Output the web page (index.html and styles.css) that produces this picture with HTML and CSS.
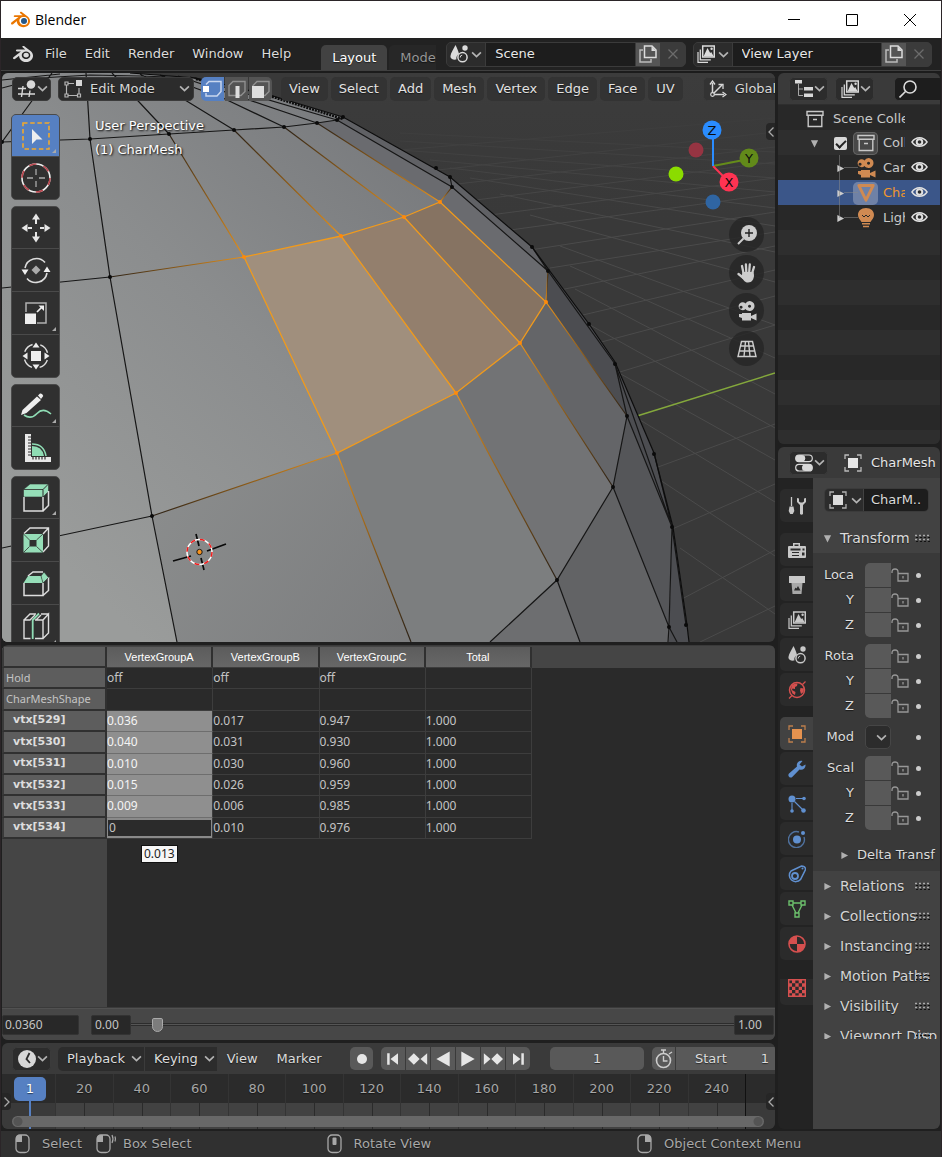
FILE: index.html
```html
<!DOCTYPE html>
<html lang="en">
<head>
<meta charset="utf-8">
<meta name="viewport" content="width=device-width, initial-scale=1">
<title>Blender</title>
<link rel="stylesheet" href="styles.css">
</head>
<body>
<svg class="sprite" aria-hidden="true">
  <symbol id="chevron" viewBox="0 0 10 10"><path d="M1 3l4 4 4-4" fill="none" stroke="#b4b4b4" stroke-width="1.5"/></symbol>
  <symbol id="tri-right" viewBox="0 0 10 10"><path d="M1.500 1l7.500 4-7.500 4z" fill="currentColor"/></symbol>
  <symbol id="tri-down" viewBox="0 0 10 10"><path d="M1 1.500h8l-4 8z" fill="currentColor"/></symbol>
  <symbol id="blender" viewBox="0 0 24 24"><path fill="currentColor" d="M12.51 13.214c.046-.8.438-1.506 1.03-2.006a3.424 3.424 0 0 1 2.212-.79c.85 0 1.631.3 2.211.79.592.5.983 1.206 1.028 2.005.045.823-.285 1.586-.865 2.153a3.389 3.389 0 0 1-2.374.938 3.393 3.393 0 0 1-2.376-.938c-.58-.567-.91-1.33-.865-2.152M7.35 14.831c.006.314.106.922.256 1.398a7.372 7.372 0 0 0 1.593 2.757 8.227 8.227 0 0 0 2.787 2.001 8.947 8.947 0 0 0 3.66.76 8.964 8.964 0 0 0 3.657-.772 8.285 8.285 0 0 0 2.785-2.01 7.428 7.428 0 0 0 1.592-2.762 6.964 6.964 0 0 0 .25-3.074 7.123 7.123 0 0 0-1.016-2.779 7.764 7.764 0 0 0-1.852-2.043h.002L13.566 2.55l-.02-.015c-.492-.378-1.319-.376-1.86.002-.547.382-.609 1.015-.123 1.415l-.001.001 3.126 2.543-9.53.01h-.013c-.788.001-1.545.518-1.695 1.172-.154.665.38 1.217 1.2 1.22V8.9l4.83-.01-8.62 6.617-.034.025c-.813.622-1.075 1.658-.563 2.313.52.667 1.625.668 2.447.004L7.414 14s-.069.52-.063.831zm12.09 1.741c-.97.988-2.326 1.548-3.795 1.55-1.47.004-2.827-.552-3.797-1.538a4.51 4.51 0 0 1-1.036-1.622 4.282 4.282 0 0 1 .282-3.519 4.702 4.702 0 0 1 1.153-1.371c.942-.768 2.141-1.183 3.396-1.185 1.256-.002 2.455.41 3.398 1.175.48.391.87.854 1.152 1.367a4.28 4.28 0 0 1 .522 1.706 4.236 4.236 0 0 1-.239 1.811 4.54 4.54 0 0 1-1.035 1.626"/></symbol>
  <symbol id="scene" viewBox="0 0 18 18"><path d="M5.500 0C7 3 8.600 6.500 9 9c-2 1-3 3-2.600 5.600C3 15.200.4 13.800.4 11.200.8 8 3.800 3.600 5.500 0z" fill="currentColor"/><circle cx="15" cy="3" r="2.700" fill="currentColor"/><circle cx="12.500" cy="12.200" r="4.600" fill="none" stroke="currentColor" stroke-width="1.500"/><path d="M10.200 12.500a2.300 2.300 0 0 1 2-2.400" fill="none" stroke="currentColor"/></symbol>
  <symbol id="layers" viewBox="0 0 18 18"><g fill="none" stroke="currentColor"><path d="M1 7v10.300h10" stroke-width="1.200"/><path d="M3.300 4.500v10.300h10.500" stroke-width="1.300"/><path d="M5.700 1h11.600v11H5.700z" stroke-width="1.500"/></g><path d="M6.500 11.500l4-8.500 2.700 5 1-1 2.600 4.500z" fill="currentColor"/><circle cx="14.600" cy="3.700" r="1.200" fill="currentColor"/></symbol>
  <symbol id="copy" viewBox="0 0 18 18"><path d="M5.500 1H13l4 4v7.500H5.500z" fill="none" stroke="currentColor" stroke-width="1.500"/><path d="M12.500 1v5H17z" fill="currentColor"/><path d="M4 5H1v12h11v-3" fill="none" stroke="currentColor" stroke-width="1.500" opacity=".75"/></symbol>
  <symbol id="cross" viewBox="0 0 12 12"><path d="M1.500 1.500l9 9m0-9l-9 9" fill="none" stroke="currentColor" stroke-width="1.300"/></symbol>
  <symbol id="grid-ball" viewBox="0 0 18 18"><path d="M0 8.500h8M0 14h17M5 6L3.500 17M12 10.500L11 17M9 13" fill="none" stroke="currentColor" stroke-width="1.400"/><circle cx="13" cy="4.500" r="4.300" fill="currentColor"/></symbol>
  <symbol id="edit-mode" viewBox="0 0 18 18"><path d="M1 2h3v3H1zM1 14h3v3H1zM13.500 14h3v3h-3zM2.500 5v9M4 15.500h9.500M15 8v6M4 3.500h6" fill="none" stroke="currentColor" stroke-width="1.200" opacity=".8"/><path d="M12 0h6v6h-6z" fill="currentColor"/></symbol>
  <symbol id="sel-vert" viewBox="0 0 20 20"><path d="M3 5.500l3-3h12v10L14 17H3v-3" fill="none" stroke="#c9d6ee" stroke-width="1.500"/><path d="M0 7h6v6H0z" fill="#fff"/></symbol>
  <symbol id="sel-edge" viewBox="0 0 20 20"><path d="M2 6.500l4-4h12v10l-4 4H2z" fill="none" stroke="#909090" stroke-width="1.400"/><path d="M8.500 7h4v12h-4z" fill="#dedede"/></symbol>
  <symbol id="sel-face" viewBox="0 0 20 20"><path d="M2 6.500l4-4h12v10l-4 4H2z" fill="none" stroke="#909090" stroke-width="1.400"/><path d="M1 7h12v12H1z" fill="#dedede"/></symbol>
  <symbol id="axes" viewBox="0 0 18 18"><path d="M3.500 3v11M4.500 14.500H15M5 13L13 5" fill="none" stroke="currentColor" stroke-width="1.500"/><path d="M1 4.500L3.500 1 6 4.500M13.500 12l3.500 2.500-3.500 2.500M9.500 4.500H14v4.500" fill="none" stroke="currentColor" stroke-width="1.300"/><circle cx="3.500" cy="14.500" r="1.800" fill="#2c2c2c" stroke="currentColor" stroke-width="1.200"/></symbol>
  <symbol id="tree" viewBox="0 0 18 18"><path d="M0 0h7v3.500H0zM9 7h9v3.600H9zM9 13.500h9V17H9z" fill="currentColor"/><path d="M3.500 4v11.500H8M3.500 9H8" fill="none" stroke="currentColor" opacity=".7"/></symbol>
  <symbol id="search" viewBox="0 0 18 18"><circle cx="11" cy="7" r="6" fill="none" stroke="currentColor" stroke-width="1.600"/><path d="M6.500 11.500L.5 17.500" stroke="currentColor" stroke-width="1.600"/></symbol>
  <symbol id="box" viewBox="0 0 18 18"><path d="M1 1.500h16v3.800H1zM2.200 5.500v11h13.600v-11M7 9.500h4" fill="none" stroke="currentColor" stroke-width="1.400"/></symbol>
  <symbol id="eye" viewBox="0 0 18 14"><path d="M1 7c4-6 12-6 16 0-4 6-12 6-16 0z" fill="none" stroke="currentColor" stroke-width="1.500"/><circle cx="9" cy="7" r="4" fill="currentColor"/><circle cx="9" cy="7" r="1.900" fill="#2b2b2b"/></symbol>
  <symbol id="camera" viewBox="0 0 20 20"><path fill="currentColor" fill-rule="evenodd" d="M12.500 0a5 5 0 1 1-4 8 4 4 0 1 1 0-5.500A5 5 0 0 1 12.500 0zM12.500 3.800a1.500 1.500 0 1 0 .1 0zM4 4.800a1.500 1.500 0 1 0 .1 0zM5 12h9v3l5.500-2.500v7L14 17v2.500H5V17L2 16v-3h3z"/></symbol>
  <symbol id="mesh" viewBox="0 0 18 18"><path d="M2.500 2.200h13L9 15.500z" fill="none" stroke="currentColor" stroke-width="2.600" stroke-linejoin="round"/></symbol>
  <symbol id="bulb" viewBox="0 0 18 20"><path d="M9 0c5 0 8 3 8 7 0 3-2 4.500-3.500 7h-9C3 11.500 1 10 1 7c0-4 3-7 8-7z" fill="currentColor"/><path d="M5 7l2 2 2-2 2 2 2-2" fill="none" stroke="#282828"/><path d="M5 15.700h8M6 18.500h6" stroke="currentColor" stroke-width="1.500"/></symbol>
  <symbol id="switches" viewBox="0 0 18 18"><rect x=".7" y="1" width="16.600" height="6.600" rx="3.300" fill="none" stroke="currentColor" stroke-width="1.200"/><rect x=".7" y="1" width="9.500" height="6.600" rx="3.300" fill="currentColor"/><rect x=".7" y="10.400" width="16.600" height="6.600" rx="3.300" fill="none" stroke="currentColor" stroke-width="1.200"/><rect x="7" y="10.400" width="10.300" height="6.600" rx="3.300" fill="currentColor"/></symbol>
  <symbol id="object" viewBox="0 0 18 18"><path d="M4 4h10v10H4z" fill="currentColor"/><path d="M1 5V1h4M13 1h4v4M17 13v4h-4M5 17H1v-4" fill="none" stroke="currentColor" stroke-width="1.300" opacity=".75"/></symbol>
  <symbol id="tools" viewBox="0 0 18 18"><path d="M3.500 0v9" stroke="currentColor" stroke-width="1.300"/><path d="M1.500 9.500h4l.8 4.500-1.500 3H2.200L.7 14z" fill="currentColor"/><path d="M9 1v4l3 3v9q1.500 1.500 3 0V8l3-3V1l-2 .5V4.500l-1.500 1h-2L11 4.500v-3z" fill="currentColor"/></symbol>
  <symbol id="render" viewBox="0 0 18 18"><path fill="currentColor" fill-rule="evenodd" d="M5 2h7v3h5q1 0 1 1v10q0 1-1 1H1q-1 0-1-1V6q0-1 1-1h4zM6.500 3.500V5h4V3.500zM2.500 7.500v2h10v-2zM14.500 7.500v2h2v-2zM4 11v1h7v-1zM4 14v1h7v-1zM14 11.500v3h2.500v-3z"/></symbol>
  <symbol id="output" viewBox="0 0 18 18"><path d="M1 0h16v7H1z" fill="currentColor"/><path fill="currentColor" fill-rule="evenodd" d="M3.500 7h11l-1 11h-9zM6 14.500h6.500L10 10l-1.500 2.500-1-1z" opacity=".8"/></symbol>
  <symbol id="world" viewBox="0 0 18 18"><circle cx="9" cy="9" r="7.500" fill="none" stroke="currentColor" stroke-width="1.500"/><path d="M3.500 4.500q3-2.500 6-2l-.5 2.500-2 1v2l-2.500-.5-.5 1.500 3.500 2-.5 3-2.500-1.500-1.500-4zM12.500 7l3.500.5-.5 3.500-2.500 2-1-3.500z" fill="currentColor"/><path d="M1 17.500l3-3M14.500 3.500l3-3" stroke="currentColor" stroke-width="1.300"/></symbol>
  <symbol id="wrench" viewBox="0 0 18 18"><path d="M17.500 4.500l-3.500 2-2.500-2L14.500 1C11 0 8 3 9 6.500L1 13.500q-1.500 2 .5 3.700 1.600 1 3-.5L11.500 9.500c3.500 1 6.500-1.500 6-5z" fill="currentColor"/></symbol>
  <symbol id="particles" viewBox="0 0 18 18"><circle cx="4" cy="4" r="3.500" fill="currentColor"/><path d="M8 3.500h7M4 8v7M6.500 6.500l8 8" stroke="currentColor" stroke-width="1.100"/><circle cx="16" cy="3.500" r="1.800" fill="currentColor"/><circle cx="4" cy="16" r="1.800" fill="currentColor"/><circle cx="15.500" cy="15.500" r="2.300" fill="currentColor"/></symbol>
  <symbol id="physics" viewBox="0 0 18 18"><circle cx="9" cy="9.500" r="4" fill="currentColor"/><path d="M11 2a8 8 0 1 0 5 5" fill="none" stroke="currentColor" stroke-width="1.400" opacity=".7"/><circle cx="15" cy="3" r="2" fill="currentColor"/></symbol>
  <symbol id="constraint" viewBox="0 0 18 18"><path d="M3 6L13.500 1q4 0 4 3.500L12.500 14.500A6 6 0 1 1 3 6z" fill="none" stroke="currentColor" stroke-width="1.500"/><circle cx="7" cy="11" r="3" fill="none" stroke="currentColor" stroke-width="1.800"/><circle cx="14.500" cy="3.500" r="1" fill="currentColor"/></symbol>
  <symbol id="mesh-data" viewBox="0 0 18 18"><path d="M1 1h4v4H1zM13 1h4v4h-4zM7 13h4v4H7zM5 3h8M4 5l4 8M14 5l-4 8" fill="none" stroke="currentColor" stroke-width="1.400"/></symbol>
  <symbol id="material" viewBox="0 0 18 18"><circle cx="9" cy="9" r="8" fill="none" stroke="currentColor" stroke-width="1.600"/><path d="M9 1a8 8 0 0 0-8 8h8v8a8 8 0 0 0 8-8H9z" fill="currentColor"/></symbol>
  <symbol id="texture" viewBox="0 0 18 18"><path d="M.7.7h16.600v16.600H.7z" fill="none" stroke="currentColor" stroke-width="1.400"/><path d="M4 1h3.300v3.300H4zM10.700 1H14v3.300h-3.300zM1 4.300h3v3.400H1zM7.300 4.300h3.400v3.400H7.300zM14 4.300h3v3.400h-3zM4 7.700h3.300V11H4zM10.700 7.700H14V11h-3.300zM1 11h3v3.300H1zM7.300 11h3.400v3.300H7.300zM14 11h3v3.300h-3zM4 14.300h3.300V17H4zM10.700 14.300H14V17h-3.300z" fill="currentColor"/></symbol>
  <symbol id="lock" viewBox="0 0 18 14"><path d="M1 5V4q0-3 3-3t3 3v1.500M7 5.500h10v7.500H7zM12 8v2.500" fill="none" stroke="currentColor" stroke-width="1.300"/></symbol>
  <symbol id="grip" viewBox="0 0 16 8"><path d="M0 1.500h2m2 0h2m2 0h2m2 0h2M0 5.500h2m2 0h2m2 0h2m2 0h2" stroke="#aaa" stroke-width="1.500"/><path d="M1 3.500h2m2 0h2m2 0h2m2 0h2M1 7.500h2m2 0h2m2 0h2m2 0h2" stroke="#111"/></symbol>
  <symbol id="clock" viewBox="0 0 18 18"><circle cx="9" cy="9" r="9" fill="currentColor"/><path d="M11.500 3L8.500 9l3.500 4" fill="none" stroke="#2b2b2b" stroke-width="1.800"/></symbol>
  <symbol id="mouse-l" viewBox="0 0 24 20"><rect x="1" y="1" width="13" height="17.500" rx="4" fill="none" stroke="currentColor" stroke-width="1.300"/><path d="M1 8V4q0-3 3-3h3v7z" fill="currentColor"/></symbol>
  <symbol id="mouse-drag" viewBox="0 0 24 20"><rect x="1" y="1" width="13" height="17.500" rx="4" fill="none" stroke="currentColor" stroke-width="1.300"/><path d="M1 8V4q0-3 3-3h3v7z" fill="currentColor"/><path d="M16 1q2 4 0 8M19 2.500q1 3 0 5" fill="none" stroke="currentColor" stroke-width="1.200"/></symbol>
  <symbol id="mouse-m" viewBox="0 0 24 20"><rect x="1" y="1" width="13" height="17.500" rx="4" fill="none" stroke="currentColor" stroke-width="1.300"/><rect x="5.500" y="3.500" width="4" height="7.500" rx="1" fill="currentColor"/></symbol>
  <symbol id="mouse-r" viewBox="0 0 24 20"><rect x="1" y="1" width="13" height="17.500" rx="4" fill="none" stroke="currentColor" stroke-width="1.300"/><path d="M14 8V4q0-3-3-3H8v7z" fill="currentColor"/></symbol>
</svg>

<div class="window">
  <header class="titlebar">
    <svg class="title-logo"><use href="#blender"/><circle cx="13" cy="11" r="4" fill="#fff"/><circle cx="13" cy="11" r="3" fill="#265787"/></svg>
    <h1 class="title">Blender</h1>
    <button class="win-btn" aria-label="Minimize"><svg viewBox="0 0 14 14"><path d="M1 6.500h12" stroke="#000"/></svg></button>
    <button class="win-btn" aria-label="Maximize"><svg viewBox="0 0 14 14"><path d="M1.500 1.500h11v11h-11z" fill="none" stroke="#000"/></svg></button>
    <button class="win-btn" aria-label="Close"><svg viewBox="0 0 14 14"><path d="M1 1l12 12M13 1L1 13" stroke="#000"/></svg></button>
  </header>

  <nav class="topbar">
    <button class="logo-btn" aria-label="Blender menu"><svg class="ic20"><use href="#blender"/></svg></button>
    <div class="menus">
      <button class="menu">File</button><button class="menu">Edit</button><button class="menu">Render</button><button class="menu">Window</button><button class="menu">Help</button>
    </div>
    <div class="tabs"><button class="tab active">Layout</button><button class="tab">Mode</button></div>
    <div class="picker">
      <button class="picker-type" aria-label="Browse scene"><svg class="ic18"><use href="#scene"/></svg><svg class="chev"><use href="#chevron"/></svg></button>
      <input class="picker-name" value="Scene" aria-label="Scene">
      <button class="picker-new" aria-label="New scene"><svg class="ic18"><use href="#copy"/></svg></button>
      <button class="picker-del" aria-label="Delete scene"><svg class="ic12"><use href="#cross"/></svg></button>
    </div>
    <div class="picker">
      <button class="picker-type" aria-label="Browse view layer"><svg class="ic18"><use href="#layers"/></svg><svg class="chev"><use href="#chevron"/></svg></button>
      <input class="picker-name" value="View Layer" aria-label="View layer">
      <button class="picker-new" aria-label="New view layer"><svg class="ic18"><use href="#copy"/></svg></button>
      <button class="picker-del" aria-label="Delete view layer"><svg class="ic12"><use href="#cross"/></svg></button>
    </div>
  </nav>

  <main class="workspace">
    <div class="col col-main">
      <section class="viewport">
        <svg class="scene" viewBox="2 73 773 569" preserveAspectRatio="xMinYMin slice" aria-label="3D view">
          <defs>
            <linearGradient id="shade" gradientUnits="userSpaceOnUse" x1="60" y1="560" x2="460" y2="150"><stop offset="0" stop-color="#9a9c9b"/><stop offset=".5" stop-color="#8b8d8e"/><stop offset="1" stop-color="#76787b"/></linearGradient>
            <linearGradient id="shade-low" gradientUnits="userSpaceOnUse" x1="180" y1="400" x2="560" y2="640"><stop offset="0" stop-color="#8c8e8e"/><stop offset="1" stop-color="#757678"/></linearGradient>
            <linearGradient id="to-sel"><stop offset="0" stop-color="#2a2015"/><stop offset="1" stop-color="#e8921a"/></linearGradient>
            <linearGradient id="from-sel"><stop offset="0" stop-color="#e8921a"/><stop offset="1" stop-color="#2a2015"/></linearGradient>
            <linearGradient id="haze" x1="0" y1="0" x2="0" y2="1"><stop offset="0" stop-color="#3c3c3c"/><stop offset=".12" stop-color="#3b3b3b"/><stop offset=".5" stop-color="#3a3a3a" stop-opacity="0"/></linearGradient>
          </defs>
          <rect x="2" y="73" width="773" height="569" fill="#393939"/>
          <g stroke="#4b4b4b" fill="none">
            <path d="M400 133L775 152M400 141L775 164M400 150L775 178M430 160L775 192M450 168L775 208M470 178L775 226M500 194L775 252M530 215L775 282M560 246L775 325M570 266L775 358M575 289L775 394M590 325L775 428M610 368L750 446L775 460M640 420L775 502M660 480L775 556M680 548L775 614"/>
            <path d="M400 150L775 118M420 172L775 132M440 186L775 147M460 202L775 162M490 215L775 178M510 230L775 194M530 250L775 212M550 268L775 232M560 290L775 246M570 318L775 270M590 345L775 296M600 378L775 325M650 470L775 424M670 530L775 484M680 600L775 550M700 642L775 606"/>
          </g>
          <rect x="300" y="73" width="475" height="300" fill="url(#haze)"/>
          <path d="M637 416L775 373" stroke="#84a83c" stroke-width="1.500"/>

          <path d="M2 73H130L196 78 273 96 343 117 450 177 532 247 589 324 615 362 654 453 673 527 687 625 689 642H2z" fill="url(#shade)"/>
          <path d="M2 288L110 277 244 257 337 453 411 642H2z" fill="url(#shade)"/>
          <path d="M152 516L337 453 411 642H177z" fill="url(#shade-low)"/>
          <path d="M337 453L456 393 557 580 490 642H411z" fill="#7c7e7f"/>
          <path d="M456 393L520 343 613 487 557 580z" fill="#727375"/>
          <path d="M520 343L546 302 627 416 613 487z" fill="#646568"/>
          <path d="M557 580L613 487 669 627V642H580z" fill="#626365"/>
          <path d="M490 642L557 580 580 642z" fill="#6d6e70"/>
          <path d="M613 487L627 416 672 527 669 627z" fill="#555659"/>
          <path d="M337 120L452 187 548 271 546 302 440 202 317 123z" fill="#6a6b6f"/>
          <path d="M343 117L450 177 532 247 548 271 452 187 337 120z" fill="#606165"/>
          <path d="M532 247L589 324 615 362 654 453 673 527 687 625 689 642H669L672 527 627 416 546 302 548 271z" fill="#4c4d51"/>
          <path d="M244 257L341 236 456 393 337 453z" fill="#a08f7d"/>
          <path d="M341 236L404 217 520 343 456 393z" fill="#937f6d"/>
          <path d="M404 217L440 202 546 302 520 343z" fill="#867362"/>

          <g fill="none" stroke="#161616" stroke-width="1.200">
            <path d="M2 142L90 139 169 134 234 130 284 127 317 123 337 120 343 117"/>
            <path d="M2 288L110 277M2 548L152 516"/>
            <path d="M86 73L90 139 110 277 152 516 177 642"/>
            <path d="M2 142L34 98 52 73M2 88L40 78 90 75 140 76 196 78M2 80L60 74M112 73L169 134M140 74L185 100 234 130M160 75L225 99 284 127M178 76L317 123M190 77L337 120"/>
            <path d="M337 120L452 187 548 271 615 364 672 527 669 627 668 642M615 364L627 416 613 487 557 580 490 642M627 416L672 527M557 580L580 642M613 487L669 627 677 642M450 177L452 187M532 247L548 271M654 453L672 527M672 527L686 625"/>
          </g>
          <path d="M130 73L196 78 273 96 343 117 450 177 532 247 589 324 615 362 654 453 673 527 687 625 689 642" fill="none" stroke="#0c0c0c" stroke-width="1.200"/>
          <path d="M196 79L273 97 343 119" fill="none" stroke="#0c0c0c" stroke-width="2.500" stroke-dasharray="2 1"/>
          <g fill="none" stroke-width="1.200" stroke="url(#to-sel)"><path d="M110 277L244 257"/><path d="M152 516L337 453"/><path d="M169 134L244 257"/><path d="M234 130L341 236"/><path d="M284 127L404 217"/><path d="M317 123L440 202"/></g>
          <g fill="none" stroke-width="1.200" stroke="url(#from-sel)"><path d="M337 453L411 642"/><path d="M456 393L557 580"/><path d="M520 343L613 487"/><path d="M546 302L627 416"/><path d="M440 202L452 187"/><path d="M546 302L548 271"/></g>
          <path d="M244 257L341 236 404 217 440 202 546 302 520 343 456 393 337 453zM341 236L456 393M404 217L520 343" fill="none" stroke="#f09a1c" stroke-width="1.300"/>
          <g fill="none" stroke-linecap="round" stroke-width="4">
            <path stroke="#0a0a0a" d="M2 142h0M90 139h0M169 134h0M234 130h0M284 127h0M317 123h0M337 120h0M343 117h0M110 277h0M152 516h0M436 168h0M450 177h0M452 187h0M532 247h0M548 271h0M589 324h0M615 364h0M627 416h0M613 487h0M557 580h0M654 454h0M672 527h0M669 627h0M686 625h0"/>
            <path stroke="#ff8a0a" d="M244 257h0M341 236h0M404 217h0M440 202h0M546 302h0M520 343h0M456 393h0M337 453h0"/>
          </g>
          <path d="M173 561L191 556M207 551L226 544M196 534L199 546M201 558L204 570" stroke="#0a0a0a" stroke-width="1.700"/>
          <circle cx="199.500" cy="552" r="12.500" fill="none" stroke="#fff" stroke-width="1.500"/>
          <circle cx="199.500" cy="552" r="12.500" fill="none" stroke="#f01c1c" stroke-width="1.500" stroke-dasharray="4.910 4.910"/>
          <circle cx="199.500" cy="552" r="2.700" fill="#f7931e" stroke="#1a1a1a"/>
        </svg>

        <div class="view-header">
          <button class="dd" aria-label="Editor type"><svg class="ic18"><use href="#grid-ball"/></svg><svg class="chev"><use href="#chevron"/></svg></button>
          <label class="dd mode"><svg class="ic18"><use href="#edit-mode"/></svg><select class="bare-select" aria-label="Mode"><option>Edit Mode</option><option>Object Mode</option></select><svg class="chev"><use href="#chevron"/></svg></label>
          <div class="select-modes">
            <button class="smode on" aria-label="Vertex select"><svg class="ic20"><use href="#sel-vert"/></svg></button>
            <button class="smode" aria-label="Edge select"><svg class="ic20"><use href="#sel-edge"/></svg></button>
            <button class="smode" aria-label="Face select"><svg class="ic20"><use href="#sel-face"/></svg></button>
          </div>
          <div class="view-menus">
            <button class="pill">View</button><button class="pill">Select</button><button class="pill">Add</button><button class="pill">Mesh</button><button class="pill">Vertex</button><button class="pill">Edge</button><button class="pill">Face</button><button class="pill">UV</button>
          </div>
          <label class="dd orient"><svg class="ic18"><use href="#axes"/></svg><select class="bare-select" aria-label="Orientation"><option>Global</option><option>Local</option></select></label>
        </div>

        <div class="view-body">
          <div class="toolbar">
            <div class="tool-group">
              <button class="tool active corner" aria-label="Select box"><svg viewBox="0 0 32 32"><rect x="3" y="3" width="26" height="26" fill="none" stroke="#f2a92c" stroke-width="1.600" stroke-dasharray="4.500 2.700"/><path d="M12 9v15l4.500-4.500h6z" fill="#eee"/></svg></button>
              <button class="tool" aria-label="Cursor"><svg viewBox="0 0 32 32"><circle cx="16" cy="16" r="14" fill="none" stroke="#eee" stroke-width="1.600"/><circle cx="16" cy="16" r="14" fill="none" stroke="#b8444c" stroke-width="1.600" stroke-dasharray="7.330 7.330"/><path d="M16 7v6M16 19v6M7 16h6M19 16h6" stroke="#aaa" stroke-width="1.300"/></svg></button>
            </div>
            <div class="tool-group">
              <button class="tool" aria-label="Move"><svg viewBox="0 0 32 32"><path d="M16 1.500l4 6h-8zM16 30.500l4-6h-8zM1.500 16l6-4v8zM30.500 16l-6-4v8z" fill="#e6e6e6"/><path d="M16 7v5M16 20v5M8 16h4M20 16h4" stroke="#e6e6e6" stroke-width="2"/></svg></button>
              <button class="tool" aria-label="Rotate"><svg viewBox="0 0 32 32"><path d="M5 14A11.500 11.500 0 0 1 25 8.500M27 19A11.500 11.500 0 0 1 7 24.500" fill="none" stroke="#ddd" stroke-width="1.600"/><path d="M1.500 15.500h7L5 21zM23.500 18h7L27 12.500z" fill="#eee"/><path d="M16 11.500l4.500 4.500-4.500 4.500-4.500-4.500z" fill="#aaa"/></svg></button>
              <button class="tool corner" aria-label="Scale"><svg viewBox="0 0 32 32"><path d="M6 15V6h20v20H17" fill="none" stroke="#b0b0b0" stroke-width="1.500"/><path d="M5 16.500h11V27H5z" fill="#eee"/><path d="M17 15l5-5" stroke="#eee" stroke-width="1.700"/><path d="M18.500 8.500H24V14z" fill="#eee"/></svg></button>
              <button class="tool" aria-label="Transform"><svg viewBox="0 0 32 32"><circle cx="16" cy="16" r="12" fill="none" stroke="#ddd" stroke-width="1.400" stroke-dasharray="11 7.850" stroke-dashoffset="-4"/><path d="M11 11h10v10H11zM16 2.500l3.500 5h-7zM16 29.500l3.500-5h-7zM2.500 16l5-3.500v7zM29.500 16l-5-3.500v7z" fill="#eee"/></svg></button>
            </div>
            <div class="tool-group">
              <button class="tool corner" aria-label="Annotate"><svg viewBox="0 0 32 32"><path d="M4 25q7 5 13-1.500t14 .5" fill="none" stroke="#8fdcb4" stroke-width="1.600"/><path d="M1 25l1.500-5L17 6.500l4 3.500L6.500 23z" fill="#eee"/><path d="M18 5.500l2-2q1-.5 2.500 1t0 2.500L21 9z" fill="#eee"/></svg></button>
              <button class="tool" aria-label="Measure"><svg viewBox="0 0 32 32"><path d="M5 2h6v23h20v5H5z" fill="#e8e8e8"/><path d="M8 5h3M8 8h3M8 11h3M8 14h3M8 17h3M8 20h3M8 23h3M13 25v2.500M16 25v2.500M19 25v2.500M22 25v2.500M25 25v2.500" stroke="#303030" stroke-width="1.200"/><path d="M12 14q10 0 12 10H12z" fill="#8fdcb4"/><path d="M12 12q12 0 14 12" fill="none" stroke="#8fdcb4" stroke-width="1.500"/></svg></button>
            </div>
            <div class="tool-group last">
              <button class="tool corner" aria-label="Extrude region"><svg viewBox="0 0 32 32"><path d="M3.500 7.500L10 2h18.500L23 7.500zM3.500 7.500H23V15H3.500zM23 7.500L28.500 2v7.500L23 15z" fill="#96deb8" stroke="#303030" stroke-width=".6"/><path d="M4 15v14h19V15M23 29l5.500-5.500V9" fill="none" stroke="#ddd" stroke-width="1.500"/></svg></button>
              <button class="tool" aria-label="Inset faces"><svg viewBox="0 0 32 32"><path d="M4 9.500L10 4h18.500v18L23 28M28.500 4L23 10" fill="none" stroke="#ddd" stroke-width="1.400"/><path d="M3.500 10H23v18.500H3.500zM9.500 16v6.500h7V16z" fill="#96deb8" fill-rule="evenodd"/><path d="M3.500 10l6 6M23 10l-6.500 6M3.500 28.500l6-6M23 28.500l-6.500-6" stroke="#303030" stroke-width=".8"/></svg></button>
              <button class="tool" aria-label="Bevel"><svg viewBox="0 0 32 32"><path d="M4 16v12.500h19V16M23 28.500l5.500-5V10M8 9l5-4h10" fill="none" stroke="#ddd" stroke-width="1.500"/><path d="M3.500 16L8 9h13l2 7z" fill="#96deb8"/><path d="M21 9l3-4 4.500 5.500L23 16z" fill="#96deb8" stroke="#303030" stroke-width=".6"/></svg></button>
              <button class="tool corner" aria-label="Loop cut"><svg viewBox="0 0 32 32"><path d="M10.500 28.500H4V10h6.500M15 10h8v18.500h-8M23 28.500l5.500-5.500V4L23 10M4 10l6-6h6M21 4h7.500M10 10l5-5M16 10l5-5" fill="none" stroke="#ddd" stroke-width="1.400"/><path d="M12.700 29V10l6.300-6.500" fill="none" stroke="#8fdcb4" stroke-width="1.800"/></svg></button>
            </div>
          </div>
          <p class="view-info">User Perspective<br>(1) CharMesh</p>
        </div>

        <svg class="gizmo" viewBox="665 118 100 95" font-family="DejaVu Sans, sans-serif" font-size="13" text-anchor="middle">
          <path d="M713 166L749 159" stroke="#658c1a" stroke-width="2"/><path d="M713 166L729 182" stroke="#ff3352" stroke-width="2"/><path d="M713 166V131" stroke="#2a8cff" stroke-width="2"/>
          <circle cx="696" cy="150" r="7.500" fill="#963442"/><circle cx="676" cy="174" r="7.500" fill="#8bdc00"/><circle cx="713" cy="202" r="7.500" fill="#2f65a2"/>
          <circle cx="712" cy="130" r="9.500" fill="#2a8cff"/><circle cx="749" cy="158" r="9.500" fill="#628a1a"/><circle cx="729" cy="182" r="9.500" fill="#ff3352"/>
          <g fill="#0c0c0c"><text x="712" y="135">Z</text><text x="749" y="163">Y</text><text x="729" y="187">X</text></g>
        </svg>
        <div class="nav-buttons">
          <button class="nav" aria-label="Zoom"><svg viewBox="0 0 20 20"><circle cx="12" cy="8" r="8" fill="#ccc"/><path d="M6.500 13.500L1 19" stroke="#ccc" stroke-width="2"/><path d="M12 4v8M8 8h8" stroke="#222" stroke-width="1.400"/></svg></button>
          <button class="nav" aria-label="Pan"><svg viewBox="0 0 20 20"><path d="M6.500 10L5 3M9.300 9L8.900 1.500M12.200 9l.6-7.500M15 10.500l2-6.500M6.500 15L1.500 11" stroke="#ccc" stroke-width="2.300" stroke-linecap="round"/><path d="M5.500 9H16.500L17 12c0 4-2 7.500-6 7.500-3 0-4-1.500-6.500-5.500z" fill="#ccc"/></svg></button>
          <button class="nav" aria-label="Camera view"><svg viewBox="0 0 20 20" color="#ccc"><use href="#camera"/></svg></button>
          <button class="nav" aria-label="Toggle perspective"><svg viewBox="0 0 20 20"><path d="M4.500 2.500h11l3.500 15H1zM3.500 7h13M2.300 12h15.500M8.500 2.500l-1.500 15M11.500 2.500l1.500 15" fill="none" stroke="#ccc" stroke-width="1.400"/></svg></button>
        </div>
        <button class="edge-tab view-tab" aria-label="Show sidebar"><svg viewBox="0 0 8 12"><path d="M6.500 1.500L2 6l4.500 4.500" fill="none" stroke="#aaa" stroke-width="1.300"/></svg></button>
      </section>

      <section class="weights">
        <div class="sheet">
          <table class="weight-table">
            <thead><tr><th class="rowhead" aria-label="Vertex"></th><th>VertexGroupA</th><th>VertexGroupB</th><th>VertexGroupC</th><th>Total</th></tr></thead>
            <tbody>
              <tr><th class="rowhead plain">Hold</th><td>off</td><td>off</td><td>off</td><td></td></tr>
              <tr><th class="rowhead plain">CharMeshShape</th><td></td><td></td><td></td><td></td></tr>
              <tr><th class="rowhead">vtx[529]</th><td class="sel">0.036</td><td>0.017</td><td>0.947</td><td>1.000</td></tr>
              <tr><th class="rowhead">vtx[530]</th><td class="sel">0.040</td><td>0.031</td><td>0.930</td><td>1.000</td></tr>
              <tr><th class="rowhead">vtx[531]</th><td class="sel">0.010</td><td>0.030</td><td>0.960</td><td>1.000</td></tr>
              <tr><th class="rowhead">vtx[532]</th><td class="sel">0.015</td><td>0.026</td><td>0.959</td><td>1.000</td></tr>
              <tr><th class="rowhead">vtx[533]</th><td class="sel">0.009</td><td>0.006</td><td>0.985</td><td>1.000</td></tr>
              <tr><th class="rowhead">vtx[534]</th><td class="editing"><input class="cell-input" value="0" aria-label="vtx[534] VertexGroupA"><span class="tooltip" role="tooltip">0.013</span></td><td>0.010</td><td>0.976</td><td>1.000</td></tr>
            </tbody>
          </table>
        </div>
        <div class="weight-bar">
          <input class="num-box wide" value="0.0360" aria-label="Weight">
          <input class="num-box" value="0.00" aria-label="Minimum">
          <input class="weight-range" type="range" min="0" max="1" step="0.001" value="0.036" aria-label="Weight slider">
          <input class="num-box" value="1.00" aria-label="Maximum">
        </div>
      </section>

      <section class="timeline">
        <div class="time-header">
          <button class="dd" aria-label="Editor type"><svg class="ic18"><use href="#clock"/></svg><svg class="chev"><use href="#chevron"/></svg></button>
          <div class="joined"><button class="tmenu">Playback<svg class="chev"><use href="#chevron"/></svg></button><button class="tmenu">Keying<svg class="chev"><use href="#chevron"/></svg></button></div>
          <div class="time-menus"><button class="menu">View</button><button class="menu">Marker</button></div>
          <button class="btn rec" aria-label="Record"><svg viewBox="0 0 24 24"><circle cx="12" cy="12" r="6" fill="#e6e6e6"/></svg></button>
          <div class="transport">
            <button class="btn" aria-label="Jump to start"><svg viewBox="0 0 24 24"><path d="M5 5h3v14H5zM18 5v14l-9-7z" fill="#e6e6e6"/></svg></button>
            <button class="btn" aria-label="Previous keyframe"><svg viewBox="0 0 24 24"><path d="M7 5l7 7-7 7-7-7zM23 5v14l-8-7z" fill="#e6e6e6"/></svg></button>
            <button class="btn" aria-label="Play backwards"><svg viewBox="0 0 24 24"><path d="M20 3v18L4 12z" fill="#e6e6e6"/></svg></button>
            <button class="btn" aria-label="Play"><svg viewBox="0 0 24 24"><path d="M4 3v18l16-9z" fill="#e6e6e6"/></svg></button>
            <button class="btn" aria-label="Next keyframe"><svg viewBox="0 0 24 24"><path d="M17 5l7 7-7 7-7-7zM1 5v14l8-7z" fill="#e6e6e6"/></svg></button>
            <button class="btn" aria-label="Jump to end"><svg viewBox="0 0 24 24"><path d="M16 5h3v14h-3zM6 5v14l9-7z" fill="#e6e6e6"/></svg></button>
          </div>
          <input class="frame-input" value="1" aria-label="Current frame">
          <div class="range-box"><button class="btn" aria-label="Preview range"><svg class="ic20" viewBox="0 0 20 20"><circle cx="9.500" cy="11.500" r="7" fill="none" stroke="#ccc" stroke-width="1.600"/><path d="M9.500 7v5h4M7 1h5M9.500 1v3M15 5l3-2" fill="none" stroke="#ccc" stroke-width="1.400"/></svg></button><label class="start">Start<input class="start-input" value="1"></label></div>
        </div>
        <div class="ruler">
          <div class="ticks"><span class="tick">20</span><span class="tick">40</span><span class="tick">60</span><span class="tick">80</span><span class="tick">100</span><span class="tick">120</span><span class="tick">140</span><span class="tick">160</span><span class="tick">180</span><span class="tick">200</span><span class="tick">220</span><span class="tick">240</span></div>
          <div class="playhead"><span class="playhead-label">1</span></div>
          <div class="scroll"></div>
          <button class="edge-tab tl-left" aria-label="Show channels"><svg viewBox="0 0 8 12"><path d="M1.500 1.500L6 6l-4.500 4.500" fill="none" stroke="#aaa" stroke-width="1.300"/></svg></button>
          <button class="edge-tab tl-right" aria-label="Show sidebar"><svg viewBox="0 0 8 12"><path d="M6.500 1.500L2 6l4.500 4.500" fill="none" stroke="#aaa" stroke-width="1.300"/></svg></button>
        </div>
      </section>
    </div>

    <div class="col col-side">
      <section class="outliner">
        <div class="out-header">
          <button class="dd" aria-label="Editor type"><svg class="ic18"><use href="#tree"/></svg><svg class="chev"><use href="#chevron"/></svg></button>
          <button class="dd" aria-label="Display mode"><svg class="ic18"><use href="#layers"/></svg><svg class="chev"><use href="#chevron"/></svg></button>
          <label class="search"><svg class="ic18"><use href="#search"/></svg><input class="search-input" type="search" aria-label="Search"></label>
        </div>
        <div class="out-rows">
          <div class="orow root"><svg class="ic18"><use href="#box"/></svg><span class="oname">Scene Colle</span></div>
          <div class="orow coll"><svg class="arrow"><use href="#tri-down"/></svg><input class="check" type="checkbox" checked aria-label="Collection enabled"><span class="badge"><svg class="ic18"><use href="#box"/></svg></span><span class="oname">Coll</span><button class="eye" aria-label="Hide collection"><svg><use href="#eye"/></svg></button></div>
          <div class="orow child"><svg class="arrow"><use href="#tri-right"/></svg><span class="badge none orange"><svg class="ic20"><use href="#camera"/></svg></span><span class="oname">Cam</span><button class="eye" aria-label="Hide camera"><svg><use href="#eye"/></svg></button></div>
          <div class="orow child current"><svg class="arrow"><use href="#tri-right"/></svg><span class="badge orange"><svg class="ic20"><use href="#mesh"/></svg></span><span class="oname">Cha</span><button class="eye" aria-label="Hide CharMesh"><svg><use href="#eye"/></svg></button></div>
          <div class="orow child end"><svg class="arrow"><use href="#tri-right"/></svg><span class="badge none orange"><svg class="ic20"><use href="#bulb"/></svg></span><span class="oname">Ligh</span><button class="eye" aria-label="Hide light"><svg><use href="#eye"/></svg></button></div>
        </div>
      </section>

      <section class="properties">
        <div class="prop-header"><button class="dd" aria-label="Editor type"><svg class="ic18"><use href="#switches"/></svg><svg class="chev"><use href="#chevron"/></svg></button><svg class="ic18 light"><use href="#object"/></svg><span>CharMesh</span></div>
        <div class="prop-main">
          <div class="prop-tabs">
            <button class="ptab" aria-label="Tool"><svg class="ic18"><use href="#tools"/></svg></button>
            <div class="ptab-group">
              <button class="ptab" aria-label="Render"><svg class="ic18"><use href="#render"/></svg></button>
              <button class="ptab" aria-label="Output"><svg class="ic18"><use href="#output"/></svg></button>
              <button class="ptab" aria-label="View layer"><svg class="ic18"><use href="#layers"/></svg></button>
              <button class="ptab" aria-label="Scene"><svg class="ic18"><use href="#scene"/></svg></button>
              <button class="ptab red" aria-label="World"><svg class="ic18"><use href="#world"/></svg></button>
            </div>
            <div class="ptab-group">
              <button class="ptab on orange-lt" aria-label="Object"><svg class="ic18"><use href="#object"/></svg></button>
              <button class="ptab blue" aria-label="Modifiers"><svg class="ic18"><use href="#wrench"/></svg></button>
              <button class="ptab blue" aria-label="Particles"><svg class="ic18"><use href="#particles"/></svg></button>
              <button class="ptab blue" aria-label="Physics"><svg class="ic18"><use href="#physics"/></svg></button>
              <button class="ptab blue" aria-label="Constraints"><svg class="ic18"><use href="#constraint"/></svg></button>
              <button class="ptab green" aria-label="Mesh data"><svg class="ic18"><use href="#mesh-data"/></svg></button>
              <button class="ptab red" aria-label="Material"><svg class="ic18"><use href="#material"/></svg></button>
            </div>
            <button class="ptab red cut" aria-label="Texture"><svg class="ic18"><use href="#texture"/></svg></button>
          </div>
          <div class="panels">
            <div class="id-row"><button class="id-type" aria-label="Browse object"><svg class="ic18"><use href="#object"/></svg><svg class="chev"><use href="#chevron"/></svg></button><input class="id-name" value="CharM.." aria-label="Object name"></div>
            <button class="panel-head"><svg class="arrow"><use href="#tri-down"/></svg>Transform<svg class="grip"><use href="#grip"/></svg></button>
            <div class="transform">
              <div class="triple">
                <label for="lx">Loca</label><input class="field" id="lx"><svg class="lock"><use href="#lock"/></svg><i class="dot"></i>
                <label for="ly">Y</label><input class="field" id="ly"><svg class="lock"><use href="#lock"/></svg><i class="dot"></i>
                <label for="lz">Z</label><input class="field" id="lz"><svg class="lock"><use href="#lock"/></svg><i class="dot"></i>
              </div>
              <div class="triple">
                <label for="rx">Rota</label><input class="field" id="rx"><svg class="lock"><use href="#lock"/></svg><i class="dot"></i>
                <label for="ry">Y</label><input class="field" id="ry"><svg class="lock"><use href="#lock"/></svg><i class="dot"></i>
                <label for="rz">Z</label><input class="field" id="rz"><svg class="lock"><use href="#lock"/></svg><i class="dot"></i>
              </div>
              <div class="triple">
                <label for="mode">Mod</label><span class="mode-box"><select class="mode-select" id="mode"><option></option></select><svg class="chev"><use href="#chevron"/></svg></span><i class="dot"></i>
              </div>
              <div class="triple">
                <label for="sx">Scal</label><input class="field" id="sx"><svg class="lock"><use href="#lock"/></svg><i class="dot"></i>
                <label for="sy">Y</label><input class="field" id="sy"><svg class="lock"><use href="#lock"/></svg><i class="dot"></i>
                <label for="sz">Z</label><input class="field" id="sz"><svg class="lock"><use href="#lock"/></svg><i class="dot"></i>
              </div>
              <button class="sub-head"><svg class="arrow"><use href="#tri-right"/></svg>Delta Transf</button>
            </div>
            <div class="closed">
              <button class="panel-head"><svg class="arrow"><use href="#tri-right"/></svg>Relations<svg class="grip"><use href="#grip"/></svg></button>
              <button class="panel-head"><svg class="arrow"><use href="#tri-right"/></svg>Collections<svg class="grip"><use href="#grip"/></svg></button>
              <button class="panel-head"><svg class="arrow"><use href="#tri-right"/></svg>Instancing<svg class="grip"><use href="#grip"/></svg></button>
              <button class="panel-head"><svg class="arrow"><use href="#tri-right"/></svg>Motion Paths<svg class="grip"><use href="#grip"/></svg></button>
              <button class="panel-head"><svg class="arrow"><use href="#tri-right"/></svg>Visibility<svg class="grip"><use href="#grip"/></svg></button>
              <button class="panel-head"><svg class="arrow"><use href="#tri-right"/></svg>Viewport Disp<svg class="grip"><use href="#grip"/></svg></button>
            </div>
          </div>
        </div>
      </section>
    </div>
  </main>

  <footer class="status">
    <span class="hint"><svg><use href="#mouse-l"/></svg>Select</span>
    <span class="hint"><svg><use href="#mouse-drag"/></svg>Box Select</span>
    <span class="hint mid"><svg><use href="#mouse-m"/></svg>Rotate View</span>
    <span class="hint"><svg><use href="#mouse-r"/></svg>Object Context Menu</span>
  </footer>
</div>
</body>
</html>
```
FILE: styles.css
```css
* { box-sizing: border-box; }
body { margin: 0; background: #1c1c1c; color: #dcdcdc; font: 13px/16px "DejaVu Sans", sans-serif; }
button, input, select { margin: 0; padding: 0; border: 0; background: none; color: inherit; font: inherit; text-shadow: inherit; appearance: none; border-radius: 0; min-width: 0; }
svg { display: block; flex: none; }
.sprite { position: absolute; width: 0; height: 0; }
.ic20 { width: 20px; height: 20px; }
.ic18 { width: 18px; height: 18px; }
.ic12 { width: 12px; height: 12px; }
.chev { width: 11px; height: 11px; }
.arrow { width: 9px; height: 9px; color: #b0b0b0; }

.window { display: flex; flex-direction: column; height: 100vh; min-height: 900px; border: 1px solid #2b2528; border-bottom: 0; }

.titlebar { display: flex; align-items: center; height: 37px; flex: none; background: #fff; color: #000; padding: 0 2px 0 10px; }
.title-logo { width: 19px; height: 19px; color: #ea7600; }
.title { flex: 1; margin: 0; padding-left: 5px; font: 14px/20px "Open Sans", sans-serif; }
.win-btn { width: 58px; height: 36px; display: grid; place-items: center; }
.win-btn svg { width: 14px; height: 14px; }

.topbar { display: flex; align-items: center; height: 33px; flex: none; background: #222; border-bottom: 1px solid #404040; padding: 0 9px 0 12px; margin-bottom: 2px; text-shadow: 0 1px 1px #0008; }
.logo-btn { color: #dcdcdc; }
.menus { display: flex; gap: 18px; margin-left: 12px; }
.tabs { display: flex; align-self: flex-end; gap: 2px; margin-left: 30px; width: 115px; overflow: hidden; }
.tab { height: 25px; padding: 0 11px; border-radius: 5px 5px 0 0; background: #272727; color: #959595; flex: none; }
.tab.active { background: #424242; color: #fff; }
.picker { flex: 1; display: flex; gap: 1px; height: 25px; margin-left: 7px; background: #3b3b3b; border: 1px solid #3b3b3b; border-radius: 5px; overflow: hidden; }
.tabs + .picker { margin-left: 10px; }
.picker-type { width: 38px; flex: none; display: flex; align-items: center; justify-content: space-evenly; background: #2c2c2c; }
.picker-name { flex: 1; width: 0; padding: 0 9px; background: #1d1d1d; color: #e8e8e8; }
.picker-new, .picker-del { width: 24px; flex: none; display: grid; place-items: center; }
.picker-new { background: #555; }
.picker-del { color: #6c6c6c; }

.workspace { flex: 1; min-height: 0; display: grid; grid-template-columns: minmax(0, 1fr) 162px; gap: 3px; padding: 0 1px 2px; background: #1f1f1f; }
.col { display: grid; gap: 3px; min-height: 0; min-width: 0; }
.col-main { grid-template-rows: minmax(0, 569fr) minmax(0, 395fr) 86px; }
.col-side { grid-template-rows: minmax(0, 371fr) minmax(0, 682fr); }
section { min-width: 0; overflow: hidden; border-radius: 6px; }

.dd { display: flex; align-items: center; justify-content: space-between; width: 39px; height: 24px; padding: 0 2px 0 5px; background: #2c2c2c; border: 1px solid #3b3b3b; border-radius: 5px; color: #d8d8d8; text-shadow: 0 1px 1px #0008; flex: none; }

.viewport { position: relative; display: flex; flex-direction: column; }
.scene { position: absolute; inset: 0; width: 100%; height: 100%; }
.view-header { position: relative; display: flex; align-items: center; height: 31px; flex: none; padding-left: 10px; }
.view-header .dd { margin-right: 7px; }
.view-header .mode { width: 136px; gap: 8px; padding: 0 3px 0 5px; }
.bare-select { flex: 1; }
.select-modes { display: flex; gap: 1px; height: 24px; border-radius: 5px; overflow: hidden; flex: none; }
.smode { width: 23px; display: grid; place-items: center; background: #545454; }
.smode.on { background: #5680c2; }
.view-menus { display: flex; flex: none; gap: 3px; margin: 0 20px 0 9px; }
.pill { height: 24px; padding: 0 8px; background: #333; border-radius: 5px; color: #e2e2e2; text-shadow: 0 1px 1px #0008; }
.view-header .orient { gap: 8px; margin-right: 0; width: 90px; background: #333; }
.view-body { position: relative; display: flex; align-items: flex-start; gap: 35px; padding: 10px 0 0 9px; min-height: 0; }
.toolbar { display: flex; flex-direction: column; gap: 6px; width: 49px; flex: none; }
.tool-group { display: flex; flex-direction: column; gap: 1px; border: 1px solid #4a4a4a; border-radius: 5px; overflow: hidden; background: #4a4a4a; }
.tool { position: relative; height: 42px; display: grid; place-items: center; background: #303030; }
.tool-group .tool:first-child { height: 41px; }
.tool svg { width: 32px; height: 32px; }
.tool.active { background: #5680c2; }
.corner::after { content: ""; position: absolute; right: 3px; bottom: 3px; border: 2px solid transparent; border-right-color: #aaa; border-bottom-color: #aaa; }
.view-info { margin: 0; color: #fff; line-height: 24px; text-shadow: 1px 1px 2px #000; }
.gizmo { position: absolute; top: 45px; right: 10px; width: 100px; height: 95px; }
.nav-buttons { position: absolute; top: 144px; right: 11px; display: grid; gap: 3px; }
.nav { width: 35px; height: 35px; border-radius: 50%; background: #262626cc; display: grid; place-items: center; }
.nav svg { width: 20px; height: 20px; }
.edge-tab { position: absolute; width: 9px; height: 17px; background: #262626; display: grid; place-items: center; }
.edge-tab svg { width: 8px; height: 12px; }
.view-tab { right: 0; top: 50px; border-radius: 4px 0 0 4px; }

.weights { display: flex; flex-direction: column; background: #3a3a3a; font: 12px/18px "Noto Sans", sans-serif; color: #c4c4c4; }
.sheet { flex: 1; min-height: 0; margin-top: 1px; border-bottom: 1px solid #3a3a3a; background: linear-gradient(#454545 22px, transparent 22px), linear-gradient(90deg, #454545 105px, #2a2a2a 105px); }
.weight-table { border-collapse: separate; border-spacing: 0; table-layout: fixed; width: 530px; height: 192px; margin-top: 1px; }
.weight-table th, .weight-table td { height: 21px; padding: 0; border-right: 1px solid #3d3d3d; border-bottom: 1px solid #3d3d3d; font-weight: 400; text-align: left; }
.weight-table thead th { border-right: 2px solid #303030; background: linear-gradient(#5c5c5c, #676767); color: #fff; font: 11px/16px "Liberation Sans", sans-serif; text-align: center; }
.weight-table .rowhead { width: 105px; padding-left: 9px; background: #5d5d5d; border-right: 2px solid #303030; border-bottom: 2px solid #303030; border-left: 2px solid #3a3a3a; color: #ddd; font: 700 11px/16px "DejaVu Sans", sans-serif; text-align: left; }
.weight-table .plain { padding-left: 2px; font: 11px/16px "Noto Sans", sans-serif; color: #c4c4c4; }
.weight-table .sel { background: #8f8f8f; color: #f4f4f4; border-bottom-color: #6e6e6e; }
.weight-table .editing { position: relative; }
.cell-input { display: block; width: 100%; height: 20px; padding: 0 1px; border: 2px solid #8a8a8a; border-width: 2px 1px; background: #2b2b2b; }
.tooltip { position: absolute; left: 34px; top: 27px; padding: 0 2px; border: 1px solid #111; background: #f6f6f6; color: #222; font-size: 12px; line-height: 16px; }
.weight-bar { display: flex; align-items: center; height: 32px; flex: none; padding-right: 1px; background: #474747; border-top: 1px solid #515151; }
.num-box { width: 40px; height: 20px; padding: 0 3px; background: #282828; border: 1px solid #333; border-radius: 2px; font-size: 12px; }
.num-box.wide { width: 77px; padding: 0 2px; margin-right: 12px; }
.weight-range { flex: 1; height: 18px; background: linear-gradient(transparent 7px, #2c2c2c 7px 8px, #555 8px 9px, #2c2c2c 9px 10px, transparent 10px); }
.weight-range::-webkit-slider-thumb { appearance: none; width: 11px; height: 14px; margin: 0; background: #7c7c7c; border: 1px solid #aaa; border-radius: 2px 2px 6px 6px; }

.timeline { display: flex; flex-direction: column; background: #2b2b2b; text-shadow: 0 1px 1px #0008; }
.time-header { display: flex; align-items: center; height: 31px; flex: none; background: #3a3a3a; padding-left: 10px; }
.joined { display: flex; gap: 1px; height: 24px; margin-left: 7px; background: #3b3b3b; border-radius: 5px 0 0 5px; overflow: hidden; flex: none; }
.tmenu { display: flex; align-items: center; gap: 6px; padding: 0 2px 0 9px; background: #2c2c2c; }
.time-menus { display: flex; gap: 19px; margin: 0 29px 0 10px; flex: none; }
.btn { height: 23px; display: grid; place-items: center; background: #595959; }
.btn svg { width: 20px; height: 20px; }
.rec { width: 23px; border-radius: 5px; flex: none; }
.transport { display: grid; grid-template-columns: repeat(6, 24px); gap: 1px; margin: 0 20px 0 8px; border-radius: 5px; overflow: hidden; flex: none; }
.frame-input { flex: 1; height: 23px; border-radius: 5px; background: #595959; text-align: center; }
.range-box { display: grid; grid-template-columns: 23px 99px; gap: 1px; margin-left: 8px; border-radius: 5px 0 0 5px; overflow: hidden; flex: none; }
.start { display: flex; align-items: center; height: 23px; padding: 0 6px 0 19px; background: #595959; }
.start-input { flex: 1; width: 0; text-align: right; }
.ruler { position: relative; flex: 1; padding: 0 29px 0 53px; background: linear-gradient(#2b2b2b 29px, #3a3a3a 29px); }
.ticks { display: grid; grid-template-columns: repeat(12, 1fr); height: 100%; color: #a6a6a6; background: linear-gradient(transparent 29px, #424242 29px); border-right: 1px solid #111; }
.tick { position: relative; padding-top: 7px; text-align: center; border-left: 1px solid #343434; }
.tick::after { content: ""; position: absolute; left: 50%; top: 29px; bottom: 0; width: 1px; background: #2b2b2b; }
.playhead { position: absolute; left: 12px; top: 3px; bottom: 0; width: 32px; display: flex; flex-direction: column; align-items: center; }
.playhead::after { content: ""; flex: 1; width: 2px; background: #5680c2; }
.playhead-label { width: 32px; height: 24px; line-height: 24px; border-radius: 5px; background: #5680c2; color: #fff; text-align: center; }
.scroll { position: absolute; left: 10px; right: 11px; bottom: 2px; height: 11px; border-radius: 6px; background: radial-gradient(circle at 6px, #545454 4px, transparent 5px), radial-gradient(circle at calc(100% - 6px), #545454 4px, transparent 5px), #686868; }
.tl-left { left: 0; top: 19px; border-radius: 0 4px 4px 0; }
.tl-right { right: 0; top: 19px; border-radius: 4px 0 0 4px; }

.outliner { display: flex; flex-direction: column; background: #282828; }
.out-header { display: flex; align-items: center; gap: 7px; height: 31px; flex: none; background: #3a3a3a; padding-left: 11px; }
.search { display: flex; align-items: center; gap: 4px; flex: 1; height: 24px; margin-left: 13px; padding-left: 4px; background: #1d1d1d; border: 1px solid #3b3b3b; border-right: 0; border-radius: 5px 0 0 5px; }
.search-input { flex: 1; width: 0; }
.out-rows { flex: 1; background: repeating-linear-gradient(#282828 0 25px, #2e2e2e 25px 50px); background-position: 0 1px; }
.orow { position: relative; display: flex; align-items: center; height: 25px; padding-top: 1px; color: #c8c8c8; }
.orow:first-child { height: 26px; }
.root { padding: 3px 35px 0 28px; gap: 9px; }
.oname { flex: 1; min-width: 0; overflow: hidden; white-space: nowrap; }
.coll { padding-left: 32px; }
.check { width: 13px; height: 13px; margin: 0 6px 0 15px; background: #d8d8d8; border-radius: 2px; display: grid; place-items: center; }
.check::after { content: ""; width: 8px; height: 4px; border: solid #222; border-width: 0 0 2px 2px; rotate: -45deg; }
.badge { width: 25px; height: 23px; flex: none; display: grid; place-items: center; margin-right: 5px; border-radius: 5px; background: #484848; box-shadow: 0 0 0 1px #666 inset; }
.badge.none { background: none; box-shadow: none; }
.orange { color: #d08a52; }
.child { padding-left: 58px; }
.child .arrow { color: #ccc; margin-right: 8px; }
.child::before { content: ""; position: absolute; left: 61px; top: 0; bottom: 0; width: 1px; background: #8888; }
.child.end::before { bottom: 12px; }
.child::after { content: ""; position: absolute; left: 66px; top: 12px; width: 14px; height: 1px; background: #8888; }
.current { background: #3b5689; }
.current .badge { background: #6f81a6; box-shadow: none; }
.current .oname { color: #f0962e; }
.eye { width: 35px; padding: 0 0 2px 6px; color: #e0e0e0; }
.eye svg { width: 17px; height: 14px; }

.properties { display: flex; flex-direction: column; background: #232323; text-shadow: 0 1px 1px #0008; }
.prop-header { display: flex; align-items: center; height: 31px; flex: none; padding-left: 11px; background: #3a3a3a; color: #e6e6e6; }
.prop-header .light { margin: 0 9px 0 16px; }
.prop-main { flex: 1; min-height: 0; display: grid; grid-template-columns: 35px minmax(0, 1fr); }
.prop-tabs { display: flex; flex-direction: column; gap: 11px; padding: 11px 0 0 2px; }
.ptab-group { display: flex; flex-direction: column; gap: 2px; }
.ptab { height: 33px; width: 33px; display: grid; place-items: center; background: #2b2b2b; border-radius: 5px 0 0 5px; color: #c8c8c8; flex: none; }
.ptab.on { background: #424242; }
.ptab.cut { height: 26px; margin-top: 8px; align-items: start; border-top-left-radius: 0; }
.ptab.red { color: #d5504f; }
.ptab.blue { color: #6090d0; }
.ptab.green { color: #6cc06c; }
.ptab.orange-lt { color: #e5924f; }
.panels { background: #424242; overflow: hidden; }
.id-row { display: flex; gap: 1px; height: 24px; margin: 10px 11px 11px; border: 1px solid #3b3b3b; border-radius: 5px; overflow: hidden; }
.id-type { width: 38px; display: flex; align-items: center; gap: 4px; padding: 0 2px 0 4px; background: #2c2c2c; }
.id-name { flex: 1; width: 0; padding-left: 7px; background: #1d1d1d; }
.panel-head { position: relative; display: flex; align-items: center; gap: 8px; width: 100%; height: 30px; padding: 0 0 0 10px; font-size: 14px; white-space: nowrap; }
.grip { position: absolute; right: 9px; top: 11px; width: 16px; height: 8px; }
.transform { display: flex; flex-direction: column; gap: 7px; padding-top: 10px; background: #393939; }
.triple { display: grid; grid-template-columns: 41px 11px 26px 17px 1fr; grid-auto-rows: 24px; row-gap: 1px; align-items: center; }
.triple label { grid-column: 1; text-align: right; }
.field, .mode-box { grid-column: 3; }
.field { width: 26px; height: 24px; background: #595959; }
.field:nth-of-type(1) { border-top-left-radius: 5px; }
.field:nth-of-type(3) { border-bottom-left-radius: 5px; }
.lock { width: 18px; height: 14px; color: #979797; }
.dot { grid-column: 5; width: 5px; height: 5px; margin-left: 8px; border-radius: 50%; background: #ccc; }
.mode-box { position: relative; display: flex; align-items: center; justify-content: flex-end; height: 24px; padding-right: 3px; background: #2c2c2c; border: 1px solid #464646; border-radius: 5px; }
.mode-select { position: absolute; inset: 0; width: 100%; }
.sub-head { display: flex; align-items: center; gap: 8px; height: 32px; padding: 0 0 0 27px; margin-top: 2px; white-space: nowrap; }
.closed { max-height: 168px; overflow: hidden; color: #d4d4d4; }

.status { display: flex; align-items: center; flex: none; height: 26px; padding-left: 14px; background: #303030; color: #a8a8a8; text-shadow: 0 1px 1px #0008; }
.hint { display: flex; align-items: center; gap: 3px; margin-right: 14px; }
.hint svg { width: 24px; height: 20px; }
.hint.mid { margin: 0 206px 0 121px; }
```
